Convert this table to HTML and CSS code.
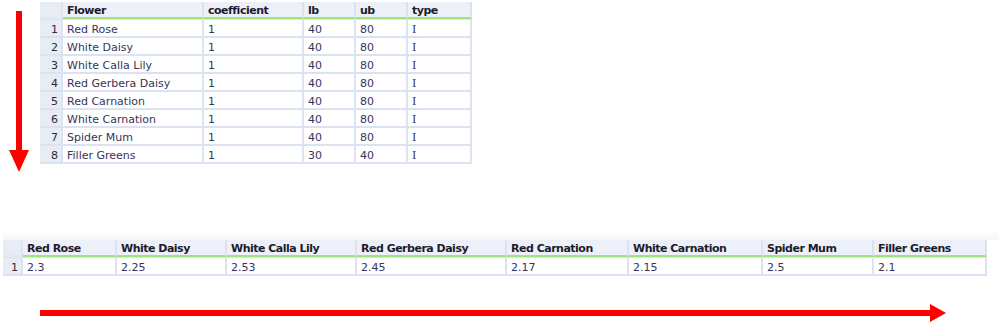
FILE: index.html
```html
<!DOCTYPE html>
<html>
<head>
<meta charset="utf-8">
<link rel="stylesheet" href="styles.css">
</head>
<body>
<div class="top">
  <svg class="arrow-down" width="40" height="174" viewBox="0 0 40 174">
    <rect x="16" y="11" width="6" height="141" fill="#ff0000"/>
    <polygon points="9,150 29,150 19,172" fill="#ff0000"/>
  </svg>
  <table class="grid grid-top">
    <colgroup>
      <col style="width:23px"><col style="width:141px"><col style="width:100px"><col style="width:52px"><col style="width:52px"><col style="width:64px">
    </colgroup>
    <thead>
      <tr><th class="num"></th><th>Flower</th><th>coefficient</th><th>lb</th><th>ub</th><th>type</th></tr>
    </thead>
    <tbody>
      <tr><td class="num">1</td><td>Red Rose</td><td>1</td><td>40</td><td>80</td><td class="t">I</td></tr>
      <tr><td class="num">2</td><td>White Daisy</td><td>1</td><td>40</td><td>80</td><td class="t">I</td></tr>
      <tr><td class="num">3</td><td>White Calla Lily</td><td>1</td><td>40</td><td>80</td><td class="t">I</td></tr>
      <tr><td class="num">4</td><td>Red Gerbera Daisy</td><td>1</td><td>40</td><td>80</td><td class="t">I</td></tr>
      <tr><td class="num">5</td><td>Red Carnation</td><td>1</td><td>40</td><td>80</td><td class="t">I</td></tr>
      <tr><td class="num">6</td><td>White Carnation</td><td>1</td><td>40</td><td>80</td><td class="t">I</td></tr>
      <tr><td class="num">7</td><td>Spider Mum</td><td>1</td><td>40</td><td>80</td><td class="t">I</td></tr>
      <tr><td class="num">8</td><td>Filler Greens</td><td>1</td><td>30</td><td>40</td><td class="t">I</td></tr>
    </tbody>
  </table>
</div>
<div class="bottom">
  <div class="scroll-band"></div>
  <table class="grid grid-bottom">
    <colgroup>
      <col style="width:20px"><col style="width:94px"><col style="width:110px"><col style="width:130px"><col style="width:150px"><col style="width:122px"><col style="width:134px"><col style="width:111px"><col style="width:113px">
    </colgroup>
    <thead>
      <tr><th class="num"></th><th>Red Rose</th><th>White Daisy</th><th>White Calla Lily</th><th>Red Gerbera Daisy</th><th>Red Carnation</th><th>White Carnation</th><th>Spider Mum</th><th>Filler Greens</th></tr>
    </thead>
    <tbody>
      <tr><td class="num">1</td><td>2.3</td><td>2.25</td><td>2.53</td><td>2.45</td><td>2.17</td><td>2.15</td><td>2.5</td><td>2.1</td></tr>
    </tbody>
  </table>
  <svg class="arrow-right" width="999" height="28" viewBox="0 0 999 28">
    <rect x="40" y="10" width="892" height="6" fill="#ff0000"/>
    <polygon points="930,4 946,13 930,22" fill="#ff0000"/>
  </svg>
</div>
</body>
</html>
```

FILE: styles.css
```css
html, body {
  margin: 0;
  padding: 0;
  background: #ffffff;
}

body {
  width: 999px;
  height: 332px;
  overflow: hidden;
  font-family: "DejaVu Sans", Verdana, sans-serif;
  font-size: 11px;
}

.top {
  display: flex;
  align-items: flex-start;
  height: 174px;
}

.arrow-down {
  display: block;
  flex: none;
}

.grid {
  border-collapse: separate;
  border-spacing: 0;
  table-layout: fixed;
  background: #e8ecf5;
}

.grid-top {
  width: 432px;
  margin-top: 2px;
}

.grid th,
.grid td {
  padding: 3px 0 0 4px;
  height: 13px;
  line-height: 13px;
  white-space: nowrap;
  overflow: hidden;
  text-align: left;
  vertical-align: top;
  border-right: 2px solid #dce3f0;
  border-bottom: 2px solid #dce3f0;
}

/* header cells: bold captions over a light green rule */
.grid th {
  background: #edf0f8;
  color: #1c1c2c;
  font-weight: bold;
  letter-spacing: -0.5px;
  height: 12px;
  line-height: 12px;
  border-bottom: 2px solid #9ee57c;
}

.grid th.num {
  border-bottom-color: #e3e8f2;
  background: #e8ecf5;
}

.grid tbody tr:first-child td {
  border-top: 1px solid #dce3f0;
}

.grid td {
  background: #ffffff;
  color: #37345a;
}

.grid td.num {
  background: #e8ecf5;
  color: #2a2a3a;
  text-align: right;
  padding: 3px 3px 0 0;
}

.grid td.t {
  font-family: "DejaVu Serif", serif;
  font-size: 11px;
}

.bottom {
  display: flex;
  flex-direction: column;
}

.scroll-band {
  height: 7px;
  margin: 59px 0 0 3px;
  width: 996px;
  background: linear-gradient(to bottom, #fbfcfe, #f5f7fb);
}

.grid-bottom {
  width: 984px;
  margin-left: 3px;
}

.arrow-right {
  display: block;
  margin-top: 24px;
}
```
